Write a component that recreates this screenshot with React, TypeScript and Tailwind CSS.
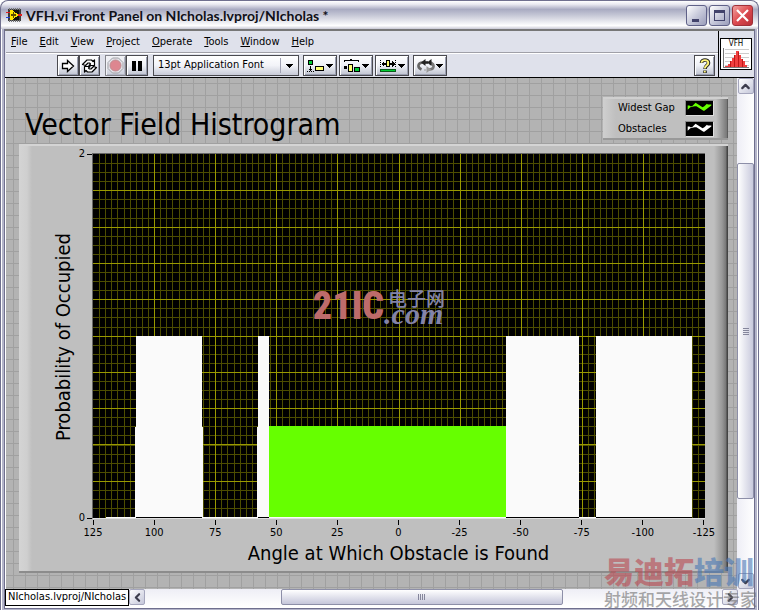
import type { ReactNode } from "react";
import { ChevronDown, ChevronLeft, ChevronRight, ChevronUp } from "lucide-react";

interface Bar {
  from: number;
  to: number;
  height: number;
  color: string;
}

const menus = ["File", "Edit", "View", "Project", "Operate", "Tools", "Window", "Help"];

const xTicks = [125, 100, 75, 50, 25, 0, -25, -50, -75, -100, -125];

// plot units: 612 wide, 364 high
const bars: Bar[] = [
  { from: 43, to: 109, height: 181, color: "#fafafa" },
  { from: 42, to: 110, height: 90, color: "#fafafa" },
  { from: 165, to: 176, height: 181, color: "#fafafa" },
  { from: 164, to: 176, height: 90, color: "#fafafa" },
  { from: 413, to: 486, height: 181, color: "#fafafa" },
  { from: 503, to: 599, height: 181, color: "#fafafa" },
  { from: 176, to: 413, height: 91, color: "#66ff00" },
];

const range = (n: number) => Array.from({ length: n }, (_, i) => i);

function ToolButton({ label, className = "", children }: { label: string; className?: string; children: ReactNode }) {
  return (
    <button
      type="button"
      aria-label={label}
      className={`flex h-[21px] items-center justify-center border border-[#4a4a50] bg-linear-to-b from-white via-[#eef0f6] to-[#bfc3d0] shadow-[inset_1px_1px_0_#fff,inset_-1px_-1px_0_#9a9eb0] ${className}`}
    >
      {children}
    </button>
  );
}

function CaptionButton({ label, className, children }: { label: string; className: string; children: ReactNode }) {
  return (
    <button
      type="button"
      aria-label={label}
      className={`flex size-[21px] items-center justify-center rounded-[3px] border ${className}`}
    >
      {children}
    </button>
  );
}

function ScrollButton({ label, children }: { label: string; children: ReactNode }) {
  return (
    <button
      type="button"
      aria-label={label}
      className="flex size-4 shrink-0 items-center justify-center rounded-xs border border-[#a5a6bd] bg-linear-to-br from-white to-[#c5c7da] text-[#3c3c4c]"
    >
      {children}
    </button>
  );
}

function DropArrow() {
  return (
    <svg width="7" height="4" viewBox="0 0 7 4" shapeRendering="crispEdges">
      <path d="M0 0h7L3.5 4z" fill="#000" />
    </svg>
  );
}

function TitleBar() {
  return (
    <header className="flex h-[29px] shrink-0 items-center rounded-t-lg border border-b-0 border-[#6f6f8e] bg-[linear-gradient(#fff,#e8e8f0_12%,#a9abc2_30%,#c4c6d5_50%,#fff_88%,#c8c8d4)] pr-[5px] pl-[5px]">
      <svg width="16" height="16" viewBox="0 0 16 16" shapeRendering="crispEdges">
        <path d="M2 2h13v12H2z" fill="#3a3a3a" />
        <path d="M3 1h1v2H3zM5 1h1v2H5zM7 1h1v2H7zM9 1h1v2H9zM11 1h1v2h-1zM13 1h1v2h-1zM3 13h1v2H3zM5 13h1v2H5zM7 13h1v2H7zM9 13h1v2H9zM11 13h1v2h-1zM13 13h1v2h-1z" fill="#777" />
        <path d="M4 3h9v10H4z" fill="#111" />
        <path d="M4 3h2l7 5-7 5H4z" fill="#ffe600" />
        <path d="M5 7h5v2H5zM7 5h1v6H7z" fill="#5a4c00" />
        <path d="M0 5h4v1H0zM12 7h4v2h-4z" fill="#e02020" />
        <path d="M0 10h4v1H0z" fill="#2040e0" />
      </svg>
      <h1 className="ml-1 flex-1 truncate font-[Lato,sans-serif] text-[14px] font-bold text-[#101018]">
        VFH.vi Front Panel on NIcholas.lvproj/NIcholas *
      </h1>
      <div className="flex gap-[2px]">
        <CaptionButton label="Minimize" className="border-[#5f6188] bg-linear-to-br from-white via-[#c8cadb] to-[#9a9dba]">
          <svg width="15" height="15" viewBox="0 0 15 15">
            <path d="M3 11h7v3H3z" fill="#42436b" />
          </svg>
        </CaptionButton>
        <CaptionButton label="Maximize" className="border-[#5f6188] bg-linear-to-br from-white via-[#c8cadb] to-[#9a9dba]">
          <svg width="15" height="15" viewBox="0 0 15 15" shapeRendering="crispEdges">
            <path d="M2 2h11v11H2zM3 5v7h9V5z" fill="#42436b" fillRule="evenodd" />
          </svg>
        </CaptionButton>
        <CaptionButton label="Close" className="border-[#a03038] bg-linear-to-br from-[#f0a0a0] via-[#dd4a50] to-[#b83038]">
          <svg width="15" height="15" viewBox="0 0 15 15">
            <path d="M2 2l11 11M13 2L2 13" stroke="#fff" strokeWidth="2.2" />
          </svg>
        </CaptionButton>
      </div>
    </header>
  );
}

function ToolBar() {
  return (
    <div className="flex h-6 items-center border-t border-white pr-[3px] pl-[51px]">
      <ToolButton label="Run" className="w-[22px]">
        <svg width="14" height="14" viewBox="0 0 14 14">
          <path d="M1.500 4.500h5v-3L12.500 7l-6 5.500v-3h-5z" fill="#fff" stroke="#000" strokeWidth="1.300" />
        </svg>
      </ToolButton>
      <ToolButton label="Run Continuously" className="w-[21px]">
        <svg width="17" height="16" viewBox="0 0 17 16" fill="#fff" stroke="#000" strokeWidth="1.200" strokeLinejoin="round">
          <path d="M1.500 6.500L6 2h4.500l1.500 1.500L13.500 2v5.500H8L9.500 6 8.500 5H7L4.500 7.500z" />
          <path d="M15.500 9.500L11 14H6.500L5 12.500 3.500 14V8.500H9L7.500 10l1 1H10l2.500-2.500z" />
        </svg>
      </ToolButton>
      <ToolButton label="Abort Execution" className="ml-[5px] w-[21px] opacity-60">
        <svg width="17" height="17" viewBox="0 0 17 17">
          <path d="M5.500 1h6L16 5.500v6L11.500 16h-6L1 11.500v-6z" fill="#e8e8ee" stroke="#777" />
          <circle cx="8.500" cy="8.500" r="5.500" fill="#dd4a55" stroke="#a55" />
        </svg>
      </ToolButton>
      <ToolButton label="Pause" className="w-[22px]">
        <svg width="10" height="10" viewBox="0 0 10 10" shapeRendering="crispEdges">
          <path d="M0 0h4v10H0zM6 0h4v10H6z" fill="#000" />
        </svg>
      </ToolButton>
      <div className="relative ml-[5px] flex h-[21px] w-[146px] items-center border border-[#4a4a50] bg-linear-to-b from-white via-[#f2f3f8] to-[#c8cbd8]">
        <select
          aria-label="Text settings"
          className="size-full appearance-none pb-[2px] pl-[4px] text-[11px] leading-4"
        >
          <option>13pt Application Font</option>
        </select>
        <span className="pointer-events-none absolute inset-y-[2px] right-0 flex w-[18px] items-center justify-center border-l border-[#a0a2b4]">
          <DropArrow />
        </span>
      </div>
      <ToolButton label="Align Objects" className="ml-[4px] w-[34px] gap-[1px]">
        <svg width="18" height="14" viewBox="0 0 18 14" shapeRendering="crispEdges">
          <path d="M1.500 1.500h4v4h-4z" fill="#0c3" stroke="#000" />
          <path d="M3 7h1v3h1v1H4v1H3v-1H2v-1h1z" fill="#000" />
          <path d="M0 12.500h8" stroke="#000" strokeDasharray="1 1" />
          <path d="M8.500 7.500h8v4h-8z" fill="#ffff70" stroke="#000" />
        </svg>
        <DropArrow />
      </ToolButton>
      <ToolButton label="Distribute Objects" className="ml-[2px] w-[34px] gap-[1px]">
        <svg width="18" height="14" viewBox="0 0 18 14" shapeRendering="crispEdges">
          <path d="M1 3V1.500h6V0h1v1.500h7V3" fill="none" stroke="#000" />
          <path d="M1 7h3v3H1z" fill="#000" />
          <path d="M5.500 5.500h4v7h-4z" fill="#ffff70" stroke="#000" />
          <path d="M11.500 8.500h5v4h-5z" fill="#0c3" stroke="#000" />
        </svg>
        <DropArrow />
      </ToolButton>
      <ToolButton label="Resize Objects" className="ml-[2px] w-[34px] gap-[1px]">
        <svg width="18" height="14" viewBox="0 0 18 14" shapeRendering="crispEdges">
          <path d="M1.500 1v8M16.500 1v8" stroke="#000" strokeDasharray="1 1" />
          <path d="M2 5l3-3v2h2v2H5v2zM16 5l-3-3v2h-2v2h2v2z" fill="#000" />
          <path d="M7.500 1.500h3v6h-3z" fill="#ffff70" stroke="#000" />
          <path d="M1.500 10.500h15v2h-15z" fill="#0c3" stroke="#0a5a1a" />
        </svg>
        <DropArrow />
      </ToolButton>
      <ToolButton label="Reorder" className="ml-[4px] w-[34px] gap-[1px]">
        <svg width="18" height="14" viewBox="0 0 18 14">
          <path d="M4.500 10.500C0 8.500.500 3.500 6 3.500" fill="none" stroke="#666" strokeWidth="2.600" />
          <path d="M8.500 0v7L4 3.500z" fill="#222" />
          <path d="M8 3.500h3" stroke="#222" strokeWidth="2.600" />
          <path d="M13.500 3.500c4.500 2 4 7-1.500 7" fill="none" stroke="#777" strokeWidth="2.600" />
          <path d="M9.500 7v7l4.500-3.500zM7 10.500h3v1H7z" fill="#999" />
          <path d="M14.500 0v7L10 3.500z" fill="#222" />
        </svg>
        <DropArrow />
      </ToolButton>
      <ToolButton label="Show Context Help" className="ml-auto w-[21px]">
        <svg width="12" height="16" viewBox="0 0 12 16" fill="none">
          <path d="M2.500 5C2.500 1 9.500 1 9.500 5c0 2.500-3.500 2.500-3.500 6M6 12.500V15" stroke="#222" strokeWidth="3.600" />
          <path d="M2.500 4.800C2.500 1.200 9.300 1.200 9.300 5c0 2.500-3.500 2.500-3.500 5.500M5.800 12.800v1.700" stroke="#fff47a" strokeWidth="1.900" />
        </svg>
      </ToolButton>
    </div>
  );
}

function ViIcon() {
  return (
    <div className="flex w-9 shrink-0 items-center border-l border-black pl-[1px]">
      <div className="flex size-8 flex-col items-center border border-black bg-white">
        <span className="h-[9px] text-[8px] leading-[9px]">VFH</span>
        <svg width="28" height="21" viewBox="0 0 28 21" shapeRendering="crispEdges">
          <path d="M3 1h24M3 5h24M3 9h24M3 13h24M3 17h24" stroke="#ccc" />
          <path d="M1.500 0v20M1 19.500h26" stroke="#777" />
          <path d="M3 19v-1h3v-2h2v-3h2v-3h2V7h2V3h3v4h2v4h2v2h2v4h2v2z" fill="#f04040" />
          <path d="M8.500 13v6M12.500 7v12M16.500 4v15M20.500 11v8" stroke="#c01818" />
        </svg>
      </div>
    </div>
  );
}

function LegendRow({ name, color }: { name: string; color: string }) {
  return (
    <li className="flex items-center justify-between text-[11px] leading-4">
      {name}
      <svg width="29" height="16" viewBox="0 0 29 16" className="border border-[#8a8a8a] border-r-[#ddd] border-b-[#ddd] bg-black">
        <path d="M1 5h2l1 1h2l4-4 8 5 2-1 3-3 1 1h4v1l-8 6h-1l-8-5h-2l-5 1-3 3z" fill={color} />
      </svg>
    </li>
  );
}

function Plot() {
  return (
    <svg
      viewBox="0 0 612 364"
      preserveAspectRatio="none"
      shapeRendering="crispEdges"
      role="img"
      aria-label="Vector Field Histogram"
      className="block min-h-0 w-full flex-1 bg-black"
    >
      {range(99).map((i) => (
        <rect key={`v${i}`} x={Math.round((i + 1) * 6.11)} y="0" width="1" height="364" fill="#4d4d00" />
      ))}
      {range(39).map((i) => (
        <rect key={`h${i}`} x="0" y={Math.round((i + 1) * 9.08)} width="612" height="1" fill="#4d4d00" />
      ))}
      {range(9).map((i) => (
        <rect key={`V${i}`} x={Math.round((i + 1) * 61.1)} y="0" width="1" height="364" fill="#999900" />
      ))}
      {range(9).map((i) => (
        <rect key={`H${i}`} x="0" y={Math.round((i + 1) * 36.3)} width="612" height="1" fill="#999900" />
      ))}
      {bars.map((bar) => (
        <rect
          key={`${bar.from}-${bar.height}`}
          x={bar.from}
          y={363 - bar.height}
          width={bar.to - bar.from}
          height={bar.height}
          fill={bar.color}
        />
      ))}
      <path d="M13 363.500h586" stroke="#fafafa" />
      <path d="M43 363.500h66M165 363.500h11M413 363.500h73M503 363.500h96" stroke="#000" />
    </svg>
  );
}

function Watermark() {
  return (
    <div aria-hidden="true" className="pointer-events-none absolute inset-0 flex items-center justify-center pr-[40px] pb-[60px]">
      <span className="font-['Roboto_Condensed','Liberation_Sans',sans-serif] text-[38px] leading-8 font-black text-[#bd6b6b]">
        21IC
      </span>
      <span className="flex flex-col">
        <span className="pl-1 font-['Noto_Sans_CJK_SC',sans-serif] text-[19px] leading-4 font-medium text-[#8383a8]">电子网</span>
        <span className="font-['Liberation_Serif',serif] text-[30px] leading-4 font-bold text-[#8383a8] italic">.com</span>
      </span>
    </div>
  );
}

function ChartPanel() {
  return (
    <section className="flex flex-1 border-t-2 border-b-2 border-t-[#d4d4d4] border-b-[#8c8c8c] bg-[linear-gradient(90deg,#d4d4d4,#cfcfcf_8px,#bfbfbf_13px,#bfbfbf_calc(100%-14px),#999_calc(100%-6px),#777_calc(100%-2px),#444_calc(100%-1px))] pr-[23px] pl-[32px]">
      <div className="flex w-[41px] shrink-0 flex-col">
        <div className="flex flex-1 items-center">
          <h3 className="rotate-180 text-[20px] leading-6 whitespace-nowrap [writing-mode:vertical-rl]">
            Probability of Occupied
          </h3>
        </div>
        <div className="h-[42px] shrink-0" />
      </div>
      <div className="flex min-w-0 flex-1 flex-col">
        <div className="flex flex-1 pt-[7px]">
          <div className="-my-[5px] flex w-0 shrink-0 flex-col justify-between text-[11px] leading-3">
            {[2, 0].map((tick) => (
              <span key={tick} className="flex w-0 items-center justify-end gap-[2px]">
                {tick}
                <i className="h-px w-[5px] shrink-0 bg-black" />
              </span>
            ))}
          </div>
          <div className="relative flex min-w-0 flex-1 flex-col border-t border-b border-l border-[#666] border-b-[#e0e0e0]">
            <Plot />
            <Watermark />
          </div>
        </div>
        <div className="mt-[1px] flex justify-between px-px text-[11px] leading-4">
          {xTicks.map((tick) => (
            <span key={tick} className="flex w-0 flex-col items-center">
              <i className="h-[5px] w-px bg-black" />
              {tick}
            </span>
          ))}
        </div>
        <h3 className="mb-[6px] text-center text-[20px] leading-6">Angle at Which Obstacle is Found</h3>
      </div>
    </section>
  );
}

function FrontPanel() {
  return (
    <main className="flex min-w-0 flex-1 flex-col bg-[#b3b3b3] bg-[linear-gradient(#a0a0a0_1px,transparent_1px),linear-gradient(90deg,#a0a0a0_1px,transparent_1px)] bg-[length:12px_12px] bg-[position:7px_5px] pr-[9px] pb-[16px] pl-[13px]">
      <div className="flex h-[66px] shrink-0 items-end justify-between">
        <h2 className="pb-[1px] pl-[6px] text-[30px] leading-9">Vector Field Histrogram</h2>
        <ul className="mb-1 flex h-[43px] w-[125px] flex-col justify-center gap-[5px] border-t-2 border-b-2 border-t-[#d0d0d0] border-b-[#999] bg-[linear-gradient(90deg,#cfcfcf,#bfbfbf_13px,#bfbfbf_calc(100%-12px),#777_calc(100%-1px),#444)] pr-[14px] pl-[15px]">
          <LegendRow name="Widest Gap" color="#66ff00" />
          <LegendRow name="Obstacles" color="#fff" />
        </ul>
      </div>
      <ChartPanel />
    </main>
  );
}

function VerticalScrollbar() {
  return (
    <div className="flex w-[17px] shrink-0 flex-col items-center bg-linear-to-r from-[#eeeef6] to-white">
      <ScrollButton label="Scroll up">
        <ChevronUp size={13} strokeWidth={4} />
      </ScrollButton>
      <div className="flex w-full flex-1 flex-col">
        <div className="basis-[14.5%]" />
        <div className="flex basis-[70%] flex-col items-center justify-center gap-[1px] rounded-xs border border-[#8d8fa8] bg-linear-to-r from-white to-[#c9cadd]">
          {range(4).map((i) => (
            <i key={i} className="h-px w-[6px] bg-[#85869c]" />
          ))}
        </div>
      </div>
      <ScrollButton label="Scroll down">
        <ChevronDown size={13} strokeWidth={4} />
      </ScrollButton>
    </div>
  );
}

function BottomBar() {
  return (
    <div className="flex h-[18px] shrink-0 items-start bg-linear-to-b from-[#eeeef6] to-white pr-4">
      <span className="flex h-[17px] w-[124px] shrink-0 items-center border border-black bg-white pl-[2px] text-[11px] whitespace-nowrap">
        NIcholas.lvproj/NIcholas
      </span>
      <ScrollButton label="Scroll left">
        <ChevronLeft size={13} strokeWidth={4} />
      </ScrollButton>
      <div className="flex h-4 flex-1">
        <div className="basis-[23.5%]" />
        <div className="flex basis-[49%] items-center justify-center gap-[1px] rounded-xs border border-[#8d8fa8] bg-linear-to-b from-white to-[#c5c6da]">
          {range(4).map((i) => (
            <i key={i} className="h-[6px] w-px bg-[#85869c]" />
          ))}
        </div>
      </div>
      <ScrollButton label="Scroll right">
        <ChevronRight size={13} strokeWidth={4} />
      </ScrollButton>
    </div>
  );
}

export default function App() {
  return (
    <div className="relative flex min-h-screen flex-col overflow-hidden bg-white font-['DejaVu_Sans_Condensed','DejaVu_Sans',sans-serif] text-black">
      <TitleBar />
      {/* window frame: dark edge, white bevel, inner dark line */}
      <div className="flex flex-1 flex-col border-x border-b border-[#6f6f8e] bg-[#b4b5ca] px-[3px] pb-[2px] shadow-[inset_1px_0_0_#fff,inset_-1px_0_0_#fff]">
        <div className="flex flex-1 flex-col border-x border-b border-[#6f6f8e] bg-white pb-[1px]">
          <div className="flex h-[49px] shrink-0 border-t-2 border-b border-t-[#777] border-b-black bg-[#dfe1eb] pl-px">
            <div className="flex min-w-0 flex-1 flex-col">
              <nav className="flex h-[22px] items-center gap-[12px] border-b border-[#a0a0a8] pl-[5px] text-[11px] leading-4">
                {menus.map((menu) => (
                  <a key={menu} href="#">
                    <u>{menu[0]}</u>
                    {menu.slice(1)}
                  </a>
                ))}
              </nav>
              <ToolBar />
            </div>
            <ViIcon />
          </div>
          <div className="flex flex-1 pl-px">
            <FrontPanel />
            <VerticalScrollbar />
          </div>
          <BottomBar />
        </div>
      </div>
      <div
        aria-hidden="true"
        className="pointer-events-none absolute right-0 bottom-0 w-[155px] pb-[5px] font-['Noto_Sans_CJK_SC',sans-serif] whitespace-nowrap opacity-60"
      >
        <p className="mb-[5px] text-[30px] leading-8 font-black text-[#b94a52]">
          易迪拓<span className="text-[#4a78b5]">培训</span>
        </p>
        <p className="text-[17px] leading-4 font-medium text-[#707070]">射频和天线设计专家</p>
      </div>
    </div>
  );
}
